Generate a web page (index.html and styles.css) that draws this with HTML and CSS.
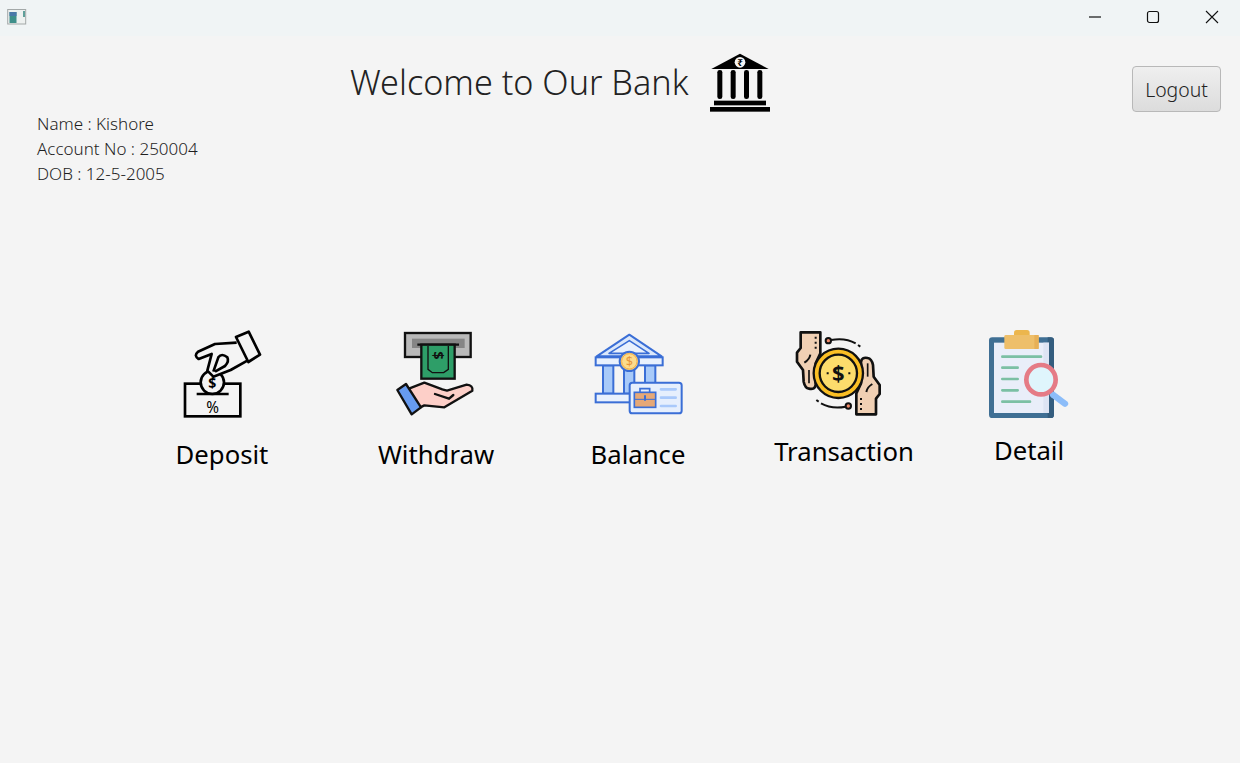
FILE: index.html
```html
<!DOCTYPE html>
<html lang="en">
<head>
<meta charset="utf-8">
<title>Welcome to Our Bank</title>
<link rel="stylesheet" href="styles.css">
</head>
<body>
<div class="titlebar">
  <svg class="app-icon" viewBox="0 0 60 40" width="60" height="40"><rect x="7.7" y="9.5" width="18" height="14.5" fill="#eef1f0" stroke="#a3a8a8" stroke-width="1"/><rect x="9.5" y="12" width="7" height="11" fill="#3f8f8a"/><rect x="9.5" y="12" width="7" height="4" fill="#4a78a8"/><rect x="23" y="11" width="2" height="6" fill="#5f9f9a"/></svg>
  <div class="window-controls">
    <div class="win-btn"><svg viewBox="0 0 14 14" width="14" height="14"><path d="M1 7h12" stroke="#111" stroke-width="1.2"/></svg></div>
    <div class="win-btn"><svg viewBox="0 0 14 14" width="14" height="14"><rect x="1.5" y="1.5" width="11" height="11" rx="2" fill="none" stroke="#111" stroke-width="1.2"/></svg></div>
    <div class="win-btn"><svg viewBox="0 0 14 14" width="14" height="14"><path d="M1 1l12 12M13 1L1 13" stroke="#111" stroke-width="1.1"/></svg></div>
  </div>
</div>
<main class="content">
  <header class="header">
    <h1 class="title">Welcome to Our Bank</h1>
    <svg class="bank-logo" viewBox="0 0 240 225" width="80" height="75">
      <path d="M120 26L206 72H34z" fill="#000"/>
      <circle cx="120" cy="52" r="16" fill="#f4f4f4"/>
      <text x="120" y="63" text-anchor="middle" class="logo-rupee">₹</text>
      <rect x="52" y="75" width="15" height="87" rx="7" fill="#000"/>
      <rect x="92" y="75" width="15" height="87" rx="7" fill="#000"/>
      <rect x="132" y="75" width="15" height="87" rx="7" fill="#000"/>
      <rect x="172" y="75" width="15" height="87" rx="7" fill="#000"/>
      <rect x="42" y="167" width="156" height="14" fill="#000"/>
      <rect x="30" y="186" width="180" height="14" fill="#000"/>
    </svg>
    <button class="logout">Logout</button>
  </header>
  <section class="info">
    <div>Name : Kishore</div>
    <div>Account No : 250004</div>
    <div>DOB : 12-5-2005</div>
  </section>
  <section class="actions">
    <div class="action">
      <svg class="action-icon" viewBox="-9 0 330 330">
        <rect x="45" y="191" width="166" height="98" fill="none" stroke="#000" stroke-width="8"/>
        <circle cx="127" cy="187" r="35" fill="#f4f4f4" stroke="#000" stroke-width="8"/>
        <path d="M80 222H176" stroke="#000" stroke-width="8"/>
        <text x="127" y="203" text-anchor="middle" class="glyph-coin">$</text>
        <text x="128" y="278" text-anchor="middle" class="glyph-pct">%</text>
        <path d="M200 68L135 72 84 95Q70 107 86 117L125 102 112 152 130 170 182 150 232 122" fill="#f4f4f4" stroke="#000" stroke-width="8" stroke-linejoin="round"/>
        <path d="M130 155L145 112Q155 98 172 112 178 124 165 138L135 155" fill="none" stroke="#000" stroke-width="8" stroke-linejoin="round"/>
        <path d="M198 51L236 35 270 104 235 126z" fill="#f4f4f4" stroke="#000" stroke-width="8" stroke-linejoin="round"/>
      </svg>
      <span class="action-label">Deposit</span>
    </div>
    <div class="action">
      <svg class="action-icon" viewBox="-12 0 330 330">
        <rect x="60" y="39" width="197" height="72" fill="#b9b9b9" stroke="#111" stroke-width="7"/>
        <rect x="81" y="56" width="158" height="28" fill="#858585"/>
        <path d="M97 74H222" stroke="#111" stroke-width="7"/>
        <rect x="109" y="74" width="100" height="102" fill="#2e9e68" stroke="#111" stroke-width="7"/>
        <path d="M129 78V148L142 158H176L190 148V78" fill="none" stroke="#111" stroke-width="4"/>
        <text x="160" y="122" text-anchor="middle" class="glyph-bill" transform="rotate(90 160 106)">$</text>
        <path d="M66 208L118 188 172 208 186 212 245 194Q265 196 262 212L178 262 118 256 106 262z" fill="#fdcfc8" stroke="#111" stroke-width="7" stroke-linejoin="round"/>
        <path d="M150 222L192 236 205 225" fill="none" stroke="#111" stroke-width="7" stroke-linecap="round"/>
        <path d="M37 210L63 192 108 262 80 283z" fill="#679bf0" stroke="#111" stroke-width="7" stroke-linejoin="round"/>
      </svg>
      <span class="action-label">Withdraw</span>
    </div>
    <div class="action">
      <svg class="action-icon" viewBox="-6 0 330 330">
        <path d="M133 44L230 109H35z" fill="#dbe8fb" stroke="#3a6ed6" stroke-width="6" stroke-linejoin="round"/>
        <path d="M133 62L192 100H72z" fill="#e9f1fd" stroke="#3a6ed6" stroke-width="5" stroke-linejoin="round"/>
        <rect x="54" y="136" width="31" height="85" fill="#a8caf9" stroke="#3a6ed6" stroke-width="6"/>
        <rect x="117" y="136" width="31" height="85" fill="#a8caf9" stroke="#3a6ed6" stroke-width="6"/>
        <rect x="180" y="136" width="31" height="85" fill="#a8caf9" stroke="#3a6ed6" stroke-width="6"/>
        <rect x="32" y="112" width="201" height="24" fill="#e9f1fd" stroke="#3a6ed6" stroke-width="6"/>
        <rect x="32" y="221" width="110" height="26" fill="#e9f1fd" stroke="#3a6ed6" stroke-width="6"/>
        <circle cx="133" cy="124" r="29" fill="#fbd27c" stroke="#3a6ed6" stroke-width="6"/>
        <circle cx="133" cy="124" r="23" fill="#fcdc8c" stroke="#f4b04a" stroke-width="3"/>
        <text x="133" y="137" text-anchor="middle" class="glyph-coin-b">$</text>
        <rect x="134" y="188" width="156" height="92" rx="8" fill="#e6effd" stroke="#3a6ed6" stroke-width="6"/>
        <path d="M165 217V206H194V217" fill="none" stroke="#3a6ed6" stroke-width="5"/>
        <rect x="148" y="217" width="64" height="45" fill="#e6a877" stroke="#3a6ed6" stroke-width="5"/>
        <path d="M148 238H212" stroke="#3a6ed6" stroke-width="3"/>
        <path d="M180 226V242" stroke="#3a6ed6" stroke-width="6"/>
        <path d="M228 208H272M228 233H272M228 258H272" stroke="#a9c9fb" stroke-width="8" stroke-linecap="round"/>
      </svg>
      <span class="action-label">Balance</span>
    </div>
    <div class="action action-high">
      <svg class="action-icon" viewBox="12 0 330 330">
        <g>
          <path d="M47 37H106V100L92 130V194Q90 210 72 206 60 204 56 185L54 150 36 125V98L47 84z" fill="#f0d0b4" stroke="#111" stroke-width="8" stroke-linejoin="round"/>
          <path d="M92 50V56M92 65V71M92 80V86" stroke="#111" stroke-width="6"/>
          <path d="M58 128Q74 118 76 104" fill="none" stroke="#111" stroke-width="6"/>
          <path d="M72 150V190" stroke="#111" stroke-width="5"/>
          <circle cx="130" cy="62" r="8" fill="#f08a6a" stroke="#111" stroke-width="6"/>
          <path d="M138 60Q180 52 212 70" fill="none" stroke="#111" stroke-width="6"/>
          <path d="M219 75L226 80" stroke="#111" stroke-width="6"/>
        </g>
        <g transform="rotate(180 160 160)">
          <path d="M47 37H106V100L92 130V194Q90 210 72 206 60 204 56 185L54 150 36 125V98L47 84z" fill="#f0d0b4" stroke="#111" stroke-width="8" stroke-linejoin="round"/>
          <path d="M92 50V56M92 65V71M92 80V86" stroke="#111" stroke-width="6"/>
          <path d="M58 128Q74 118 76 104" fill="none" stroke="#111" stroke-width="6"/>
          <path d="M72 150V190" stroke="#111" stroke-width="5"/>
          <circle cx="130" cy="62" r="8" fill="#f08a6a" stroke="#111" stroke-width="6"/>
          <path d="M138 60Q180 52 212 70" fill="none" stroke="#111" stroke-width="6"/>
          <path d="M219 75L226 80" stroke="#111" stroke-width="6"/>
        </g>
        <circle cx="160" cy="160" r="74" fill="#fbbf24" stroke="#111" stroke-width="7"/>
        <circle cx="160" cy="160" r="56" fill="#fcdc6c" stroke="#111" stroke-width="7"/>
        <text x="160" y="184" text-anchor="middle" class="glyph-coin-t">$</text>
        <path d="M125 160H131M190 160H196" stroke="#111" stroke-width="6"/>
      </svg>
      <span class="action-label">Transaction</span>
    </div>
    <div class="action action-higher">
      <svg class="action-icon" viewBox="-3 0 330 330">
        <rect x="42" y="52" width="195" height="242" rx="10" fill="#3f6f94"/>
        <path d="M218 52H227A10 10 0 0 1 237 62V284A10 10 0 0 1 227 294H218z" fill="#345d7e"/>
        <rect x="57" y="68" width="165" height="211" fill="#e9eef9"/>
        <rect x="205" y="68" width="17" height="211" fill="#dde4f3"/>
        <rect x="117" y="30" width="47" height="24" rx="8" fill="#ecb64d"/>
        <rect x="88" y="45" width="103" height="42" rx="4" fill="#eebf6a"/>
        <rect x="178" y="45" width="13" height="42" fill="#e7b057"/>
        <path d="M82 110H198M82 143H128M82 177H128M82 211H128M82 245H165" stroke="#7bc0a4" stroke-width="8" stroke-linecap="round"/>
        <path d="M234 224L270 251" stroke="#8cbdf9" stroke-width="19" stroke-linecap="round"/>
        <circle cx="198" cy="179" r="44" fill="#dff5fc" stroke="#e57b86" stroke-width="14"/>
      </svg>
      <span class="action-label">Detail</span>
    </div>
  </section>
</main>
</body>
</html>
```
FILE: styles.css
```css
* { box-sizing: border-box; }
html, body { margin: 0; height: 100%; }
body {
  width: 1240px;
  height: 763px;
  overflow: hidden;
  background: #f4f4f4;
  font-family: "Noto Sans", "Open Sans", sans-serif;
  color: #333;
}
.titlebar {
  height: 36px;
  background: #f0f4f5;
  display: flex;
  justify-content: space-between;
}
.app-icon { display: block; }
.window-controls { display: flex; margin-right: -1px; }
.win-btn {
  width: 58.5px;
  height: 34px;
  display: flex;
  align-items: center;
  justify-content: center;
}
.content { display: flex; flex-direction: column; }
.header {
  display: flex;
  align-items: flex-start;
  padding: 9px 19px 0 350px;
  height: 75px;
}
.title {
  margin: 15px 0 0;
  font-size: 34.2px;
  font-weight: 300;
  line-height: 44px;
  white-space: nowrap;
  color: #222;
}
.bank-logo { display: block; margin-left: 11px; flex: none; }
.logout {
  margin: 21px 0 0 auto;
  width: 89px;
  height: 46px;
  border: 1px solid #b8b8b8;
  border-radius: 4px;
  background: linear-gradient(#efefef, #dcdcdc);
  font: 300 19.4px "Noto Sans", sans-serif;
  color: #222;
  padding: 0;
}
.info {
  padding-left: 37px;
  font-size: 17px;
  font-weight: 300;
  line-height: 25px;
  color: #1f1f1f;
}
.actions {
  display: grid;
  grid-template-columns: 214px 202px 206px 185px 110px;
  margin-top: 134px;
  padding-left: 167px;
}
.action {
  width: 110px;
  display: flex;
  flex-direction: column;
  align-items: center;
}
.action-icon { width: 110px; height: 110px; display: block; flex: none; }
.action-label {
  margin-top: 5px;
  font-size: 25.7px;
  font-weight: 400;
  line-height: 40px;
  white-space: nowrap;
  color: #000;
}
.action-high .action-label { margin-top: 2px; }
.action-higher .action-label { margin-top: 1px; }
.logo-rupee { font: 700 30px "Noto Sans", sans-serif; fill: #000; }
.glyph-coin { font: 700 42px "Noto Sans", sans-serif; fill: #000; }
.glyph-pct { font: 400 46px "Noto Sans", sans-serif; fill: #000; }
.glyph-bill { font: 700 44px "Noto Sans", sans-serif; fill: #111; }
.glyph-coin-b { font: 400 38px "Noto Sans", sans-serif; fill: #e8953a; }
.glyph-coin-t { font: 700 66px "Noto Sans", sans-serif; fill: #111; }
```
